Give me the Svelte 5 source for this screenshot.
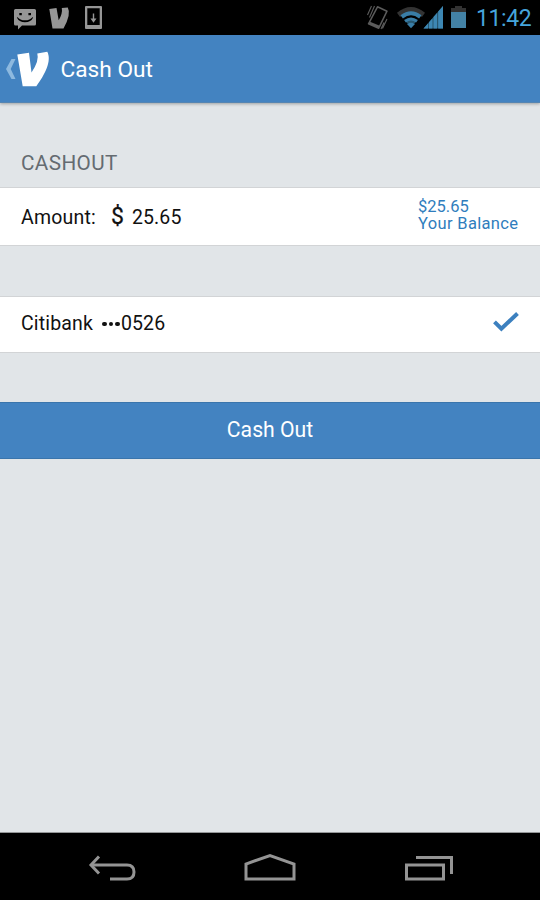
<script>
  const balance = '25.65';
  const account = { bank: 'Citibank', last4: '0526' };
</script>

<div class="screen">
  <div class="status">
    <svg class="s-left" viewBox="0 0 120 35" width="120" height="35">
      <path fill="#969696" fill-rule="evenodd" d="M15.500 9H34.500Q36 9 36 10.500V24Q36 25.500 34.500 25.500H22L18 29.500V25.500H15.500Q14 25.500 14 24V10.500Q14 9 15.500 9ZM19.300 13V15.300H21.800V13ZM28.400 13V15.300H31V13ZM16.800 17.600Q19 22.300 25 22.300Q31 22.300 33.200 17.600L32.400 17.200Q30 20.300 25 20.300Q20 20.300 17.600 17.200Z" />
      <path fill="#969696" d="M49.300 9L56.500 8L58.700 20.200Q62.800 13.500 61.800 8L67.800 7.500Q71.500 14 63.500 28.500H52.500Z" />
      <path fill="#969696" fill-rule="evenodd" d="M86 6H101Q102 6 102 7V28Q102 29 101 29H86Q85 29 85 28V7Q85 6 86 6ZM87.300 8.300V25H99.700V8.300Z" />
      <path fill="#969696" d="M92.800 13.500H94.200V18.500H96.500L93.500 22.700L90.500 18.500H92.800Z" />
    </svg>
    <svg class="s-right" viewBox="360 0 112 35" width="112" height="35">
      <g fill="none" stroke="#5c5c5c" stroke-width="1.100">
        <path d="M377.500 6.800L387 11.200L378.700 28.200L368.500 23.800Z" stroke-width="1.500" stroke-linejoin="round" />
        <path d="M369.500 22.800L379.300 27" stroke-width="2.500" />
        <path d="M371.500 6L367.500 15M374.500 6L369.500 17.500M387 19L382.500 28.500M384 22.500L381 29" />
      </g>
      <path fill="#333" d="M397 12.700Q411 1.300 425 12.700L422 17Q411 8.500 400 17Z" />
      <g fill="none" stroke="#397da6" stroke-width="4">
        <path d="M401.700 16.800Q411 9.800 420.300 16.800" />
      </g>
      <path fill="#28576f" d="M405 20.500Q411 15.500 417 20.500L414.500 23.500H407.500Z" />
      <path d="M405 21.300Q411 16.800 417 21.300" fill="none" stroke="#397da6" stroke-width="3" />
      <path fill="#397da6" d="M407 24Q411 21.600 415 24L411 28.300Z" />
      <path fill="#28576f" d="M423.500 28.500L443 6V28.500Z" />
      <path fill="#3d87b3" d="M423.500 28.500L428 23.500V28.500ZM429 28.500V22.200L432.500 18.200V28.500ZM433.500 28.500V17L437 13V28.500ZM438.200 28.500V11.600L443 6V28.500Z" />
      <path fill="#333" d="M451 8H455V6H462V8H466V12H451Z" />
      <path fill="#4382a6" d="M451 12H466V28H451Z" />
    </svg>
    <span class="clock">11:42</span>
  </div>

  <header>
    <svg viewBox="0 0 56 67" width="56" height="67">
      <path fill="#8db9df" d="M11.500 24H15.500L10.700 34L15.500 44H11.500L6 34Z" />
      <path fill="#fff" d="M17.300 19.500L29 17.700L31.500 37.500Q39.500 25.500 37.300 18.500L47.300 16.800C52 26 45 39.500 36.300 51.200H22.700Z" />
    </svg>
    <h1>Cash Out</h1>
  </header>

  <main>
    <h2>CASHOUT</h2>
    <div class="row amount">
      <span class="label">Amount:</span>
      <span class="dollar">$</span>
      <span class="value">{balance}</span>
      <div class="balance"><span>${balance}</span><span class="caption">Your Balance</span></div>
    </div>
    <div class="row bank">
      <span class="name">{account.bank}</span>
      <span class="dots"><i></i><i></i><i></i></span>
      <span class="digits">{account.last4}</span>
      <svg viewBox="0 0 28 22" width="28" height="22">
        <path d="M2.500 10.800L9.400 17.700L25.500 2.500" fill="none" stroke="#3c80bf" stroke-width="4" />
      </svg>
    </div>
    <button>Cash Out</button>
  </main>

  <nav>
    <svg viewBox="0 833 540 67" width="540" height="67" fill="none" stroke="#949494" stroke-width="3">
      <path d="M91 865H127Q134 865 134 872Q134 879 127 879H110" />
      <path d="M99 856.500L91 865L99 873.500" />
      <path d="M246 879V864L270 855.500L294 864V879Z" />
      <path d="M406.500 865H443.500V879H406.500Z" />
      <path d="M416 857.500H451.500V874" />
    </svg>
  </nav>
</div>

<style>
  :global(body) { margin: 0; background: #000; }
  .screen {
    width: 540px;
    height: 900px;
    display: flex;
    flex-direction: column;
    overflow: hidden;
    background: #e1e5e8;
    font-family: Roboto, "Liberation Sans", sans-serif;
  }
  svg { display: block; flex: none; }
  .status { display: flex; height: 35px; flex: none; background: #000; }
  .s-right { margin-left: auto; }
  .clock {
    width: 68px;
    padding-left: 4px;
    box-sizing: border-box;
    font-size: 23px;
    letter-spacing: -0.400px;
    line-height: 37px;
    color: #46a5dc;
    white-space: nowrap;
  }
  header {
    display: flex;
    height: 67px;
    flex: none;
    background: #4383c1;
    border-bottom: 1px solid #5585b2;
    box-shadow: 0 1px 3px rgba(0, 0, 0, 0.3);
  }
  h1 {
    margin: 0 0 0 4.500px;
    font-size: 22.700px;
    font-weight: 400;
    line-height: 70px;
    color: #fff;
    white-space: nowrap;
  }
  main { flex: 1; display: flex; flex-direction: column; }
  h2 {
    margin: 48px 0 12px 21px;
    font-size: 20.700px;
    font-weight: 400;
    letter-spacing: 0.400px;
    line-height: 24px;
    color: #646b71;
  }
  .row {
    display: flex;
    align-items: center;
    box-sizing: border-box;
    background: #fff;
    border: solid #d2d4d6;
    border-width: 1px 0;
    padding: 0 22px 0 21px;
    color: #111;
    font-size: 19.5px;
    line-height: 24px;
    white-space: nowrap;
  }
  .amount { height: 59px; }
  .label { width: 90px; letter-spacing: 0.200px; padding-top: 2px; }
  .value { padding-top: 2px; letter-spacing: 0.100px; }
  .dollar { width: 21px; font-size: 23px; line-height: 20px; -webkit-text-stroke: 0.250px #111; }
  .balance {
    display: flex;
    flex-direction: column;
    margin-left: auto;
    font-size: 16.500px;
    line-height: 17px;
    color: #2f7dbd;
    padding-bottom: 3px;
  }
  .caption { letter-spacing: 0.330px; margin-right: -0.330px; }
  .bank { height: 57px; margin-top: 50px; }
  .name { width: 81px; letter-spacing: 0.150px; padding-bottom: 2px; }
  .dots { display: flex; gap: 2px; width: 19px; padding-bottom: 1px; }
  .dots i { width: 4.600px; height: 4.600px; border-radius: 50%; background: #111; }
  .digits { letter-spacing: 0.100px; padding-bottom: 2px; }
  .bank svg { margin: 0 -2px 6px auto; }
  button {
    margin: 49px 0 0;
    height: 57px;
    border: solid #3a75ac;
    border-width: 1px 0;
    background: #4383c1;
    color: #fff;
    font: 400 21.200px/54px Roboto, sans-serif;
    padding: 0 0 1px;
  }
  nav { height: 67px; flex: none; background: #000; border-top: 1px solid #949698; }
</style>
